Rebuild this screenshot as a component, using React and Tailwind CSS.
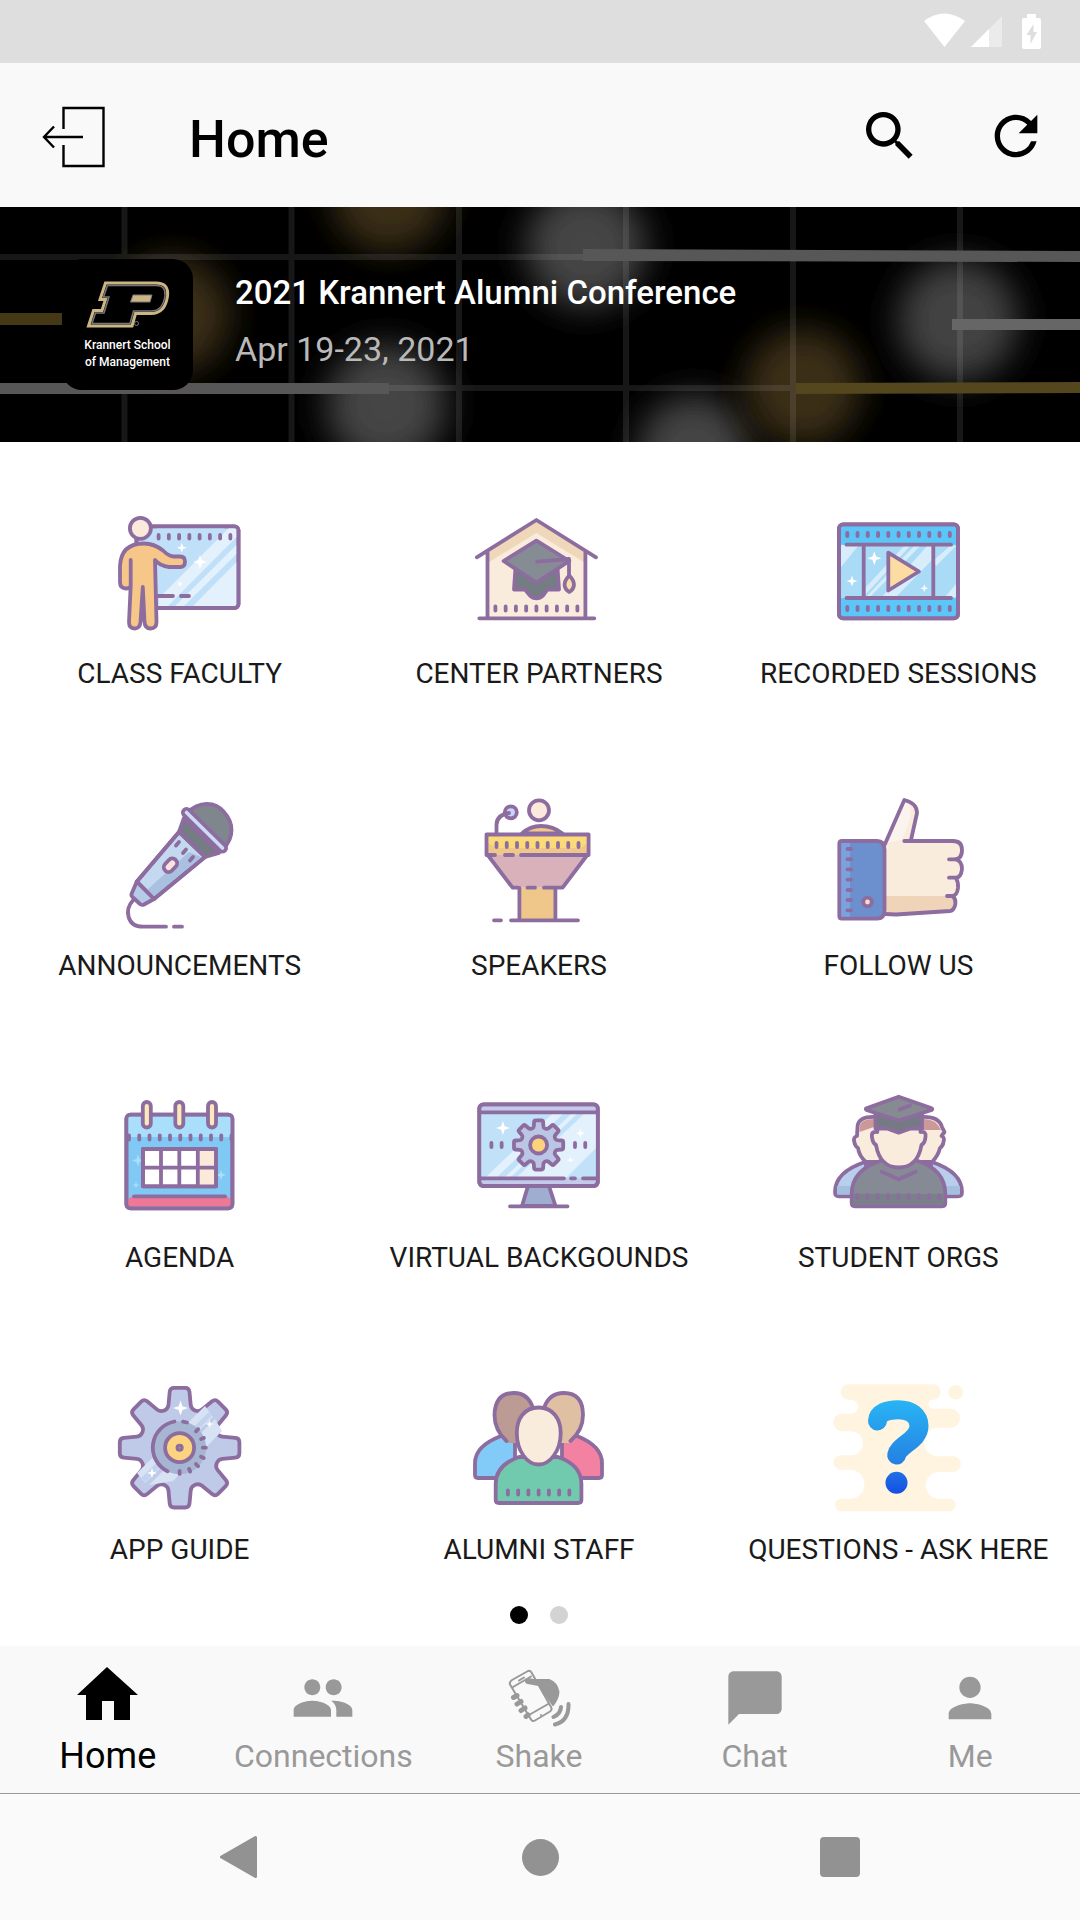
import { MdSearch, MdRefresh, MdPeople, MdChatBubble, MdPerson } from 'react-icons/md';

const PURPLE = '#8d6c9f';

function IconFrame({ viewBox = '0 0 144 144', children }) {
  return (
    <svg
      viewBox={viewBox}
      className="w-36 h-36"
      fill="none"
      stroke={PURPLE}
      strokeWidth="3.8"
      strokeLinecap="round"
      strokeLinejoin="round"
      aria-hidden="true"
    >
      {children}
    </svg>
  );
}

function Ticks({ x, y, count, length = 3, step = 10.25 }) {
  return (
    <g>
      {Array.from({ length: count }, (_, i) => (
        <path key={i} d={`M${x + i * step} ${y}v${length}`} />
      ))}
    </g>
  );
}

function Sparkle({ x, y, r, fill = '#fff' }) {
  const k = r * 0.25;
  return (
    <path
      stroke="none"
      fill={fill}
      d={`M${x} ${y - r}L${x + k} ${y - k}L${x + r} ${y}L${x + k} ${y + k}L${x} ${y + r}L${x - k} ${y + k}L${x - r} ${y}L${x - k} ${y - k}Z`}
    />
  );
}

// outline of an eight-tooth cog wheel, with its corners rounded off
function gearPath(cx, cy, outer, inner, topHalf, baseHalf, round) {
  const points = [];
  for (let i = 0; i < 8; i++) {
    const a = i * 45 - 90;
    [
      [inner, a - baseHalf],
      [outer, a - topHalf],
      [outer, a + topHalf],
      [inner, a + baseHalf],
    ].forEach(([r, deg]) => {
      const rad = (deg * Math.PI) / 180;
      points.push([cx + r * Math.cos(rad), cy + r * Math.sin(rad)]);
    });
  }
  const toward = (from, to) => {
    const len = Math.hypot(to[0] - from[0], to[1] - from[1]);
    const t = Math.min(round / len, 0.5);
    return `${(from[0] + (to[0] - from[0]) * t).toFixed(1)} ${(from[1] + (to[1] - from[1]) * t).toFixed(1)}`;
  };
  const corners = points.map((p, i) => {
    const prev = points[(i + points.length - 1) % points.length];
    const next = points[(i + 1) % points.length];
    return `${toward(p, prev)}Q${p[0].toFixed(1)} ${p[1].toFixed(1)} ${toward(p, next)}`;
  });
  return `M${corners.join('L')}Z`;
}

function ClassFacultyIcon() {
  return (
    <IconFrame viewBox="1 0 144 144">
      <rect x="29.5" y="24.3" width="102" height="81.7" rx="4" fill="#bfe0f8" />
      <path stroke="none" fill="#e3f1fd" d="M61 104L129.500 35V26H122L52 96V104ZM77 104L129.500 52V43L68 104ZM86 104H129.500V60Z" />
      <path stroke="none" fill="#bfe0f8" d="M50 26H118L50 94Z" />
      <Sparkle x={74.800} y={45.700} r={5} />
      <Sparkle x={93} y={60} r={7} />
      <Sparkle x={73} y={82} r={3} />
      <rect x="29.5" y="24.3" width="102" height="81.7" rx="4" />
      <Ticks x={51.600} y={33} count={8} length={3.500} />
      <path d="M50 94H66M74 94H82" />
      <path stroke="none" fill="#fff" d="M10 44H28V110H10ZM20 90H44V132H20Z" />
      <path
        fill="#f6c788"
        d="M23.7 58V84Q23 86.500 19 86.500Q13 86.500 13 80V64Q14 41.500 37 41.500Q47 41.500 56 48.500Q62 54.500 67 54.500H73Q78 54.500 78 59.700Q78 65 73 65H62Q53 64 48 58L49.500 120Q49.500 126.500 43.500 126.500Q38 126.500 37.500 120L35.800 85L33.500 120Q33 126.500 27.500 126.500Q22 126.500 22 120L23.700 84"
      />
      <circle cx="33.4" cy="26.3" r="10.5" fill="#fbeadb" />
    </IconFrame>
  );
}

function CenterPartnersIcon() {
  return (
    <IconFrame>
      <path stroke="none" fill="#faecdc" d="M20.500 49L69.400 18L118.400 49V116H20.500Z" />
      <path stroke="none" fill="#efd7b9" d="M20.500 49L69.400 18L118.400 49V61L69.400 31L20.500 61Z" />
      <path d="M9.800 55.300L69.400 18L129 55.300M20.500 50V116.300M118.400 50V116.300M12.300 116.300H127.300" />
      <path fill="#757d84" d="M48.500 66L47 87.500H58L62.500 93Q69.400 99.500 76.500 93L80.500 87.500H92L90.500 66Z" />
      <path fill="#868c94" d="M69.400 38.700L102.300 59L69.400 80.700L36.600 59Z" />
      <path d="M70 59.700L102 57V73" />
      <path fill="#fbdca8" d="M102.300 73.500C96 80 96 86 102.300 90C108.500 86 108.500 80 102.300 73.500Z" />
      <Ticks x={28.400} y={104.500} count={9} length={4} />
    </IconFrame>
  );
}

function RecordedSessionsIcon() {
  return (
    <IconFrame>
      <rect x="13" y="22.3" width="119" height="94" rx="4" fill="#5bc6f7" />
      <path stroke="none" fill="#a9dbf7" d="M15 42.700H130V96H15Z" />
      <path
        stroke="none"
        fill="#d8edfc"
        d="M15 43H33L15 65ZM40 92L84 44H78L40 85ZM44 95L94 44H88L40 95ZM56 95H70L106 58V44H101ZM109 62V57L124 44H130L110 64ZM119 95L130 82V95Z"
      />
      <rect x="13" y="22.3" width="119" height="94" rx="4" />
      <path d="M20.500 42.700H125M20.500 96H125M37.700 43V95M107.300 43V95" />
      <path fill="#fbdca2" d="M62.300 50.700L93 69.500L62.300 88.500Z" />
      <Ticks x={21.300} y={31} count={11} />
      <Ticks x={21.300} y={105} count={11} />
      <Sparkle x={48.300} y={56.300} r={7} />
      <Sparkle x={26} y={79} r={5.500} />
      <Sparkle x={98.300} y={86.300} r={4} />
    </IconFrame>
  );
}

function AnnouncementsIcon() {
  return (
    <IconFrame viewBox="1 0 144 144">
      <path fill="#80868d" d="M80 19C92 7 108 7 117 18C127 29 127 43 117 54Z" />
      <path fill="#757c83" d="M77 24L72 38L98 63L112 59Z" />
      <path fill="#c4d8f0" d="M72 38L98 63L47 105L29.700 87.700Z" />
      <path stroke="none" fill="#a9c0e0" d="M94 63L48 102L40 96L82 58Z" />
      <path d="M72 38L98 63L47 105L29.700 87.700Z" />
      <path fill="#b5cbe8" d="M29.700 87.700L24.500 100Q24 102 26 103.500L33 110Q35 111.500 37 110.500L47 105Z" />
      <path strokeWidth="11" d="M79.500 18.500L115.500 54" />
      <path strokeWidth="3.6" stroke="#ccdcf5" d="M79.500 18.500L115.500 54" />
      <path d="M26.300 106C17 116 20 132.700 36 132.700H59M67 132.700H75" />
      <path d="M69 51.500L72 48M76 59L79 55.500M83 66.500L86 63" />
      <rect x="56" y="66.500" width="15" height="9.500" rx="4.700" fill="#fbe3e0" transform="rotate(-47 63.500 71.300)" />
    </IconFrame>
  );
}

function SpeakersIcon() {
  return (
    <IconFrame viewBox="1 0 144 144">
      <circle cx="73" cy="16.300" r="10" fill="#fbeadb" />
      <path fill="#f3c788" d="M56 39.500Q64 32 75 32Q87 32 96.500 39.500Z" />
      <circle cx="44.800" cy="18.300" r="6" fill="#ccd3fa" />
      <path d="M43 19Q30.500 21 30.500 31V40" />
      <path stroke="none" fill="#d9b1ba" d="M23 61H120L96.600 93.700H46.600Z" />
      <path stroke="none" fill="#efc78b" d="M53.400 93.700H89.400V126H53.400Z" />
      <path stroke="none" fill="#fbdb77" d="M20.500 40H122.600V61H20.500Z" />
      <path stroke="none" fill="#efc78b" d="M20.500 48L30 54H115L122.600 48V61H20.500Z" />
      <path d="M29 61H20.500V40.500H122.600V61H55M39 61H47" />
      <path d="M22.500 62L46.600 93.700H52M120.500 62L96.600 93.700H78M61.500 93.700H69M53.400 94V126M89.400 94V126" />
      <path d="M28 126.300H35M45 126.300H112" />
      <Ticks x={30.500} y={49} count={9} length={4} />
    </IconFrame>
  );
}

function FollowUsIcon() {
  return (
    <IconFrame>
      <path
        fill="#faecdc"
        stroke="none"
        d="M59 50L78.300 6Q91 9 91 19L85 47H128Q136 47 136 56Q136 65 129 65.300Q137 67 136 75Q135 83 130 83.700Q133 87 132 94Q131 101 127.600 102Q130 105 129 110Q128 116 124 116.700L70 120H59Z"
      />
      <path stroke="none" fill="#fbf3ee" d="M61 49L79 8Q87 11 83 28L76 46Z" />
      <path stroke="none" fill="#f0d4ba" d="M59 102H128Q130 114 124 116.700L70 120H59Z" />
      <path d="M59 50L78.300 6Q91 9 91 19L85 46M78.300 47H127Q136 47 136 56Q136 65.300 128 65.300H123M130 65.300Q136 67 136 75Q135 83.500 130 83.700H123M130 84Q132.500 88 132 94Q131 102 126 102H121M127 102.500Q130 105 129.400 110Q128 116.500 124 117L70 120.500L59 120" />
      <path fill="#6c90cd" d="M16 47H51Q58.500 47 58.500 56V116Q58.500 124.700 51 124.700H16Q13.300 124.700 13.300 122V50Q13.300 47 16 47Z" />
      <path stroke="none" fill="#7ba2de" d="M15.300 49H24V122.700H15.300Z" />
      {[55, 65.200, 75.400, 85.700, 96, 106, 116.300].map((y) => (
        <path key={y} d={`M21.500 ${y}h3.500`} />
      ))}
      <circle cx="41.500" cy="108" r="4.300" fill="#fbdcc4" />
    </IconFrame>
  );
}

function AgendaIcon() {
  return (
    <IconFrame viewBox="1 0 144 144">
      <rect x="19.400" y="28.700" width="106" height="93.600" rx="4" fill="#80c9f5" />
      <path stroke="none" fill="#a9dffb" d="M21 30.500H124V51H21Z" />
      <path stroke="none" fill="#ef7896" d="M21 113L26 110H119L124 113V120.500H21Z" />
      <Sparkle x={31} y={74.500} r={6} fill="#a9dffb" />
      <Sparkle x={114} y={89} r={5} fill="#a9dffb" />
      <Sparkle x={29} y={99} r={3.500} fill="#a9dffb" />
      <rect x="19.400" y="28.700" width="106" height="93.600" rx="4" />
      <path d="M27 110.300H118" />
      <Ticks x={22} y={49.500} count={11} length={4} />
      {[39.800, 72.300, 105].map((x) => (
        <rect key={x} x={x - 4} y="16" width="8" height="25.500" rx="4" fill="#fce9bb" />
      ))}
      <rect x="36" y="63" width="73" height="37.300" fill="#fff" />
      <path stroke="none" fill="#fbeada" d="M91 64H107.500V99H91Z" />
      <path d="M36 63H109V100.300H36ZM54 63V100M72.300 63V100M90.800 63V100M36 81.700H109" />
    </IconFrame>
  );
}

function VirtualBackgroundsIcon() {
  return (
    <IconFrame>
      <path fill="#9eadd0" d="M61 100L55 120H88.500L82 100Z" />
      <rect x="12.300" y="18.300" width="118.500" height="81.700" rx="4" fill="#c3caea" />
      <path stroke="none" fill="#c0e1f8" d="M14 26.300H129V92.300H14Z" />
      <path stroke="none" fill="#e3f1fd" d="M19 91L86 27H97L30 91ZM38 91L105 27H111L44 91ZM50 91L117 28H129V62L100 91Z" />
      <rect x="12.300" y="18.300" width="118.500" height="81.700" rx="4" />
      <path d="M14 26.300H129M14 92.300H97M104 92.300H108M116 92.300H129M43 120.300H100.500" />
      <Sparkle x={35.900} y={42} r={7} />
      <Sparkle x={113.400} y={47.300} r={4.500} />
      <Sparkle x={103.400} y={74} r={3.500} />
      <path fill="#bac6e4" d={gearPath(71.600, 59, 25, 18, 10, 16, 1.5)} />
      <circle cx="71.600" cy="59" r="8.500" fill="#fcd27a" />
      <Ticks x={24.400} y={57} count={2} length={4} />
      <Ticks x={108} y={57} count={2} length={4} />
    </IconFrame>
  );
}

function StudentOrgsIcon() {
  return (
    <IconFrame>
      <path fill="#b9cdec" d="M39 76Q9 86 9 106Q9 110.300 13 110.300H40V76ZM106 76Q136 86 136 106Q136 110.300 132 110.300H105V76Z" />
      <path stroke="none" fill="#a5bfde" d="M11 100H40V108.500H11ZM105 100H134V108.500H105Z" />
      <path fill="#faecdc" d="M50 31Q32 30 31.500 41L31 50Q27 51 28.300 56Q29 60 32 62Q33 70 40 76L58 76V31ZM95 31Q113 30 116 41L118.500 46L115.500 50Q119 51 117.500 56Q117 60 114 62Q112 70 106 76L88 76V31Z" />
      <path stroke="none" fill="#cb9a98" d="M50 33Q34 32 33.500 42L33.500 46L48 41V33ZM96 33Q110 32 115 44H96Z" />
      <path fill="#868a94" d="M57.300 74Q25.700 83 25.700 108V117Q25.700 120.300 29 120.300H116Q119.300 120.300 119.300 117V108Q119.300 83 89 74Z" />
      <path stroke="none" fill="#7a8089" d="M27.500 108H117.500V118.500H27.500Z" />
      <path d="M55.700 85.700L72.700 93.300L89.700 85.700" />
      <Ticks x={31.300} y={109} count={9} length={3} />
      <path fill="#faecdc" d="M51.300 42V46Q45 45 46 51Q46.500 57 50 59Q54 81.500 72.700 81.500Q91.500 81.500 95.500 59Q99 57 99.500 51Q100.500 45 94.500 46V42Z" />
      <path fill="#757b84" d="M49.500 25V42.500L61 42.500L72.700 46.700L84.500 42.500L96 42.500V25Z" />
      <path fill="#868a91" d="M72.700 10.700L105.700 22.300Q107 23 105.700 24L72.700 34.500L40.500 24Q39 23 40.500 22.300Z" />
      <path d="M73.500 23.500L84 19.500" />
    </IconFrame>
  );
}

function AppGuideIcon() {
  const spokes = [45, 68, 90, 113, 135, 156, 180];
  return (
    <IconFrame viewBox="1 5 144 144">
      <path fill="#bfcae8" d={gearPath(72.600, 74.700, 60.500, 40.500, 9, 16.500, 4)} />
      <path stroke="none" fill="#d7e2f5" d="M30 100L98 33L106 44L38 110ZM42 112L108 46L115 58L66 108Z" />
      <path stroke="none" fill="#c3d3ee" d="M34 105L102 39L105 43L38 109Z" />
      <Sparkle x={73.500} y={35} r={7.500} />
      <Sparkle x={102.500} y={51} r={4} />
      <Sparkle x={45} y={100} r={5} />
      <circle cx="72.600" cy="74.700" r="26.500" fill="#a5b5d2" stroke="none" />
      <path d="M67.500 48.500A26.500 26.500 0 0 0 60.500 98.300M76 48.700L80 49.500" />
      {spokes.map((deg) => (
        <path key={deg} d="M72.600 51.500v-3" transform={`rotate(${deg} 72.600 74.700)`} />
      ))}
      <circle cx="72.600" cy="74.700" r="14.500" fill="#fcd37e" />
      <circle cx="72.600" cy="74.700" r="4" fill={PURPLE} stroke="none" />
      <circle cx="72.600" cy="74.700" r="1" fill="#b08e8c" stroke="none" />
    </IconFrame>
  );
}

function AlumniStaffIcon() {
  return (
    <IconFrame viewBox="0 5 144 144">
      <path fill="#82caf8" d="M34 63Q8 73 8 90V102Q8 105 11 105H48V63Z" />
      <path fill="#f381a2" d="M110 63Q135 73 135 90V102Q135 105 132 105H95V63Z" />
      <path stroke="none" fill="#bb9b94" d="M66 70H40Q27.500 57 27.500 42Q28 20 47 20Q62 20 66 35Z" />
      <path stroke="none" fill="#dfc0a2" d="M77 70H103Q116 57 116 42Q116 20 97 20Q82 20 77 35Z" />
      <path d="M39.500 68Q27.500 57 27.500 42Q28 20 47 20Q61 20 66 35M103.500 68Q116 57 116 42Q116 20 97 20Q82 20 77 35" />
      <path fill="#72caae" d="M52 84Q28.700 92 28.700 111V127Q28.700 130 32 130H111Q114.400 130 114.400 127V111Q114.400 92 91 84Z" />
      <path fill="#faecdc" d="M71.600 34.500C86 34.500 93.700 46 93.700 60C93.700 78 83 91.500 71.600 91.500C60 91.500 49.800 78 49.800 60C49.800 46 57 34.500 71.600 34.500Z" />
      <Ticks x={40.900} y={117.500} count={7} length={4} />
    </IconFrame>
  );
}

function QuestionsIcon() {
  return (
    <IconFrame viewBox="0 5 144 144">
      <defs>
        <linearGradient id="question" gradientUnits="userSpaceOnUse" x1="0" y1="27" x2="0" y2="120">
          <stop offset="0" stopColor="#28b5f4" />
          <stop offset="0.65" stopColor="#2583e4" />
          <stop offset="1" stopColor="#1550e4" />
        </linearGradient>
      </defs>
      <g stroke="none" fill="#fef4e0">
        <path d="M22.400 11.300H107a7.700 7.700 0 0 1 0 15.400a4.500 4.500 0 0 0 0 9H124.500a9.500 9.500 0 0 1 0 19H112a14.300 14.300 0 0 0 0 28.600H127a7.850 7.850 0 0 1 0 15.700H113a13.350 13.350 0 0 0 0 26.700H123.400a6.300 6.300 0 0 1 0 12.600H15.300a6.300 6.300 0 0 1 0 -12.600H24a14.500 14.500 0 0 0 0 -29H14.500a7.200 7.200 0 0 1 0 -14.400H25a12 12 0 0 0 0 -24H16a8.800 8.800 0 0 1 0 -17.600H25a7 7 0 0 0 0 -14H22.400a7.700 7.700 0 0 1 0 -15.400Z" />
        <circle cx="129.700" cy="19.300" r="7.300" />
      </g>
      <path
        stroke="url(#question)"
        strokeWidth="19"
        d="M51.500 48C52 40 61 36.700 72 36.700C85 36.700 93 43 93 53C93 61 87 66 80 71C75 75 71.500 78 70.700 82"
      />
      <circle cx="70.500" cy="109.700" r="11" fill="url(#question)" stroke="none" />
    </IconFrame>
  );
}

function ShakeIcon() {
  return (
    <svg viewBox="0 0 64 64" className="w-16 h-16" fill="none" stroke="currentColor" strokeLinecap="round" strokeLinejoin="round" aria-hidden="true">
      <path fill="currentColor" strokeWidth="2" d="M27 14H42Q50 17 51.500 26Q51 33 46 39L36 25Z" />
      <path fill="#f9f9f9" strokeWidth="2" d="M5 14L21 5Q23 4 24.500 6.500L44 41Q45.500 44 43 45.500L28 54.500Q25.500 56 24 53.500L3 18.500Q2 16 5 14Z" />
      <path strokeWidth="2" d="M6 21L24 10.500M22 49L42 37.500M12 14.500L17 11.500M34 49V49.100" />
      <path strokeWidth="6" d="M21 15L32 17" />
      <path strokeWidth="5" d="M6.500 31.500L10 29.500M10 38L14 35.500M14 44.500L18 42M19 50.500L21 49" />
      <path strokeWidth="4" d="M54 41Q53.500 48 46.500 51M61.500 38Q62 55 48 58.500" />
    </svg>
  );
}

function HomeIcon() {
  return (
    <svg viewBox="0 0 64 64" className="w-16 h-16" fill="currentColor" aria-hidden="true">
      <path d="M31 1L62 29H54V54H38V35H26V54H10V29H1Z" />
    </svg>
  );
}

function ExitIcon() {
  return (
    <svg viewBox="0 0 64 64" className="w-16 h-16" fill="none" stroke="currentColor" strokeWidth="2.400" aria-hidden="true">
      <path d="M21.500 25V4H61.500V62H21.500V41" />
      <path d="M2 33H41M12 22.500L2 33L12 43.500" />
    </svg>
  );
}

function StatusBar() {
  return (
    <div className="flex items-center justify-end h-[63px] bg-[#dedede] pr-9">
      <svg width="120" height="40" viewBox="0 0 120 40" fill="#fff" aria-hidden="true">
        <path d="M0 9Q20 -6 41 9L20.500 35Z" />
        <path opacity=".4" d="M78 4V35H47Z" />
        <path d="M65 17V35H47Z" />
        <path
          fillRule="evenodd"
          d="M103 2H112V6H115Q117 6 117 8V35Q117 37 115 37H100Q98 37 98 35V8Q98 6 100 6H103ZM109.500 12L102.500 23H106.500V32L113 20H109.500Z"
        />
      </svg>
    </div>
  );
}

function BannerArt() {
  return (
    <svg
      className="absolute inset-0 w-full h-full"
      viewBox="0 0 1080 235"
      preserveAspectRatio="xMidYMid slice"
      aria-hidden="true"
    >
      <defs>
        <filter id="soft" x="-50%" y="-50%" width="200%" height="200%">
          <feGaussianBlur stdDeviation="17" />
        </filter>
      </defs>
      <rect width="1080" height="235" fill="#000" />
      <circle filter="url(#soft)" cx="389" cy="-14" r="58" fill="#3a2f12" />
      <circle filter="url(#soft)" cx="172" cy="108" r="58" fill="#3a2f12" />
      <circle filter="url(#soft)" cx="386" cy="198" r="60" fill="#444" />
      <circle filter="url(#soft)" cx="586" cy="40" r="60" fill="#444" />
      <circle filter="url(#soft)" cx="958" cy="113" r="60" fill="#424242" />
      <circle filter="url(#soft)" cx="694" cy="245" r="56" fill="#444" />
      <circle filter="url(#soft)" cx="803" cy="180" r="58" fill="#3a2f12" />
      <path
        stroke="#fff"
        strokeOpacity=".09"
        strokeWidth="6"
        d="M124.500 0V235M291.500 0V235M459 0V235M626 0V235M793 0V235M960 0V235M0 50H1080M0 181H1080"
      />
      <path fill="#453815" d="M0 106H62V118H0Z" />
      <path fill="#575757" d="M0 176H389V187H0ZM583 42L1080 44V55L583 54Z" />
      <path fill="#666" d="M952 112H1080V123H952Z" />
      <path fill="#54461d" d="M796 176L1080 175V186L796 187Z" />
    </svg>
  );
}

function SchoolLogo() {
  return (
    <div className="flex flex-col items-center w-[131px] h-[131px] rounded-[20px] bg-black text-white pt-5">
      <svg width="84" height="50" viewBox="0 0 84 50" aria-hidden="true">
        <path
          d="M19.500 4H70Q83 4 81.500 17Q79 34.500 65 34.500H49.500L46 47H2.500L7.500 31.500H16L19.500 20.500H14Z"
          fill="#000"
          stroke="#cdb583"
          strokeWidth="3"
        />
        <path
          d="M21.500 6.500H70Q80 6.500 79 16.500Q77 32 65 32H47.500L44 44.500H6L9.500 34H18L23 18H17.500Z"
          fill="none"
          stroke="#77777a"
          strokeWidth="1.500"
        />
        <path d="M47 16H66L64 23H44.500Z" fill="#cdb583" stroke="#77777a" />
        <circle cx="50.500" cy="44.500" r="2" fill="none" stroke="#777" />
      </svg>
      <p className="mt-2 text-[12px] leading-[17px] font-medium text-center whitespace-nowrap">
        Krannert School
        <br />
        of Management
      </p>
    </div>
  );
}

const menuItems = [
  { label: 'CLASS FACULTY', Icon: ClassFacultyIcon },
  { label: 'CENTER PARTNERS', Icon: CenterPartnersIcon },
  { label: 'RECORDED SESSIONS', Icon: RecordedSessionsIcon },
  { label: 'ANNOUNCEMENTS', Icon: AnnouncementsIcon },
  { label: 'SPEAKERS', Icon: SpeakersIcon },
  { label: 'FOLLOW US', Icon: FollowUsIcon },
  { label: 'AGENDA', Icon: AgendaIcon },
  { label: 'VIRTUAL BACKGOUNDS', Icon: VirtualBackgroundsIcon },
  { label: 'STUDENT ORGS', Icon: StudentOrgsIcon },
  { label: 'APP GUIDE', Icon: AppGuideIcon },
  { label: 'ALUMNI STAFF', Icon: AlumniStaffIcon },
  { label: 'QUESTIONS - ASK HERE', Icon: QuestionsIcon },
];

const tabs = [
  { label: 'Home', icon: <HomeIcon />, active: true },
  { label: 'Connections', icon: <MdPeople size={64} /> },
  { label: 'Shake', icon: <ShakeIcon /> },
  { label: 'Chat', icon: <MdChatBubble size={64} /> },
  { label: 'Me', icon: <MdPerson size={64} /> },
];

export default function App() {
  return (
    <div className="flex flex-col min-h-screen bg-white font-[Roboto,sans-serif]">
      <StatusBar />

      <header className="flex items-center h-36 bg-[#f9f9f9] pt-0.5 pl-[42px] pr-8 text-black">
        <button type="button" aria-label="Log out">
          <ExitIcon />
        </button>
        <h1 className="flex-1 ml-[83px] pt-2 text-[52px] leading-[60px] font-medium">Home</h1>
        <button type="button" aria-label="Search" className="mr-[62px]">
          <MdSearch size={64} />
        </button>
        <button type="button" aria-label="Refresh">
          <MdRefresh size={64} />
        </button>
      </header>

      <section className="relative h-[235px] bg-black overflow-hidden">
        <BannerArt />
        <div className="relative flex items-center h-full pl-[62px]">
          <SchoolLogo />
          <div className="ml-[42px] pb-2">
            <h2 className="text-[33px] leading-[56px] font-medium text-white">2021 Krannert Alumni Conference</h2>
            <p className="text-[34px] leading-[56px] text-[#b9b9b9]">Apr 19-23, 2021</p>
          </div>
        </div>
      </section>

      <main className="flex-1">
        <div className="grid grid-cols-3 gap-y-[100px] pt-[60px] pr-0.5">
          {menuItems.map(({ label, Icon }) => (
            <button key={label} type="button" className="flex flex-col items-center">
              <Icon />
              <span className="mt-2 text-[28px] leading-[40px] text-[#1a1a1a] whitespace-nowrap">{label}</span>
            </button>
          ))}
        </div>
        <div className="flex justify-center gap-[22px] pt-9 pb-[22px] pr-0.5">
          <button type="button" aria-label="Page 1" className="w-[18px] h-[18px] rounded-full bg-black" />
          <button type="button" aria-label="Page 2" className="w-[18px] h-[18px] rounded-full bg-[#d3d3d3]" />
        </div>
      </main>

      <nav className="grid grid-cols-5 bg-[#f9f9f9] border-b border-[#9b9b9b] pt-5 pb-[13px] pr-0.5">
        {tabs.map(({ label, icon, active }) => (
          <a
            key={label}
            href="#"
            className={`flex flex-col items-center ${active ? 'text-black' : 'text-[#999999]'}`}
          >
            {icon}
            <span className={`mt-0.5 leading-[48px] ${active ? 'text-[36px]' : 'text-[32px]'}`}>{label}</span>
          </a>
        ))}
      </nav>

      <footer className="flex items-center justify-center gap-60 h-[126px] bg-[#fafafa] text-[#929292]">
        <button type="button" aria-label="Back">
          <svg width="60" height="60" viewBox="0 0 60 60" fill="currentColor" stroke="currentColor" strokeWidth="3" strokeLinejoin="round" aria-hidden="true">
            <path d="M11.500 30L45.500 10.500V49.500Z" />
          </svg>
        </button>
        <button type="button" aria-label="Home screen" className="flex justify-center w-[60px]">
          <span className="w-[37px] h-[37px] rounded-full bg-[#929292]" />
        </button>
        <button type="button" aria-label="Recent apps" className="flex justify-center w-[60px]">
          <span className="w-10 h-10 rounded-sm bg-[#929292]" />
        </button>
      </footer>
    </div>
  );
}
